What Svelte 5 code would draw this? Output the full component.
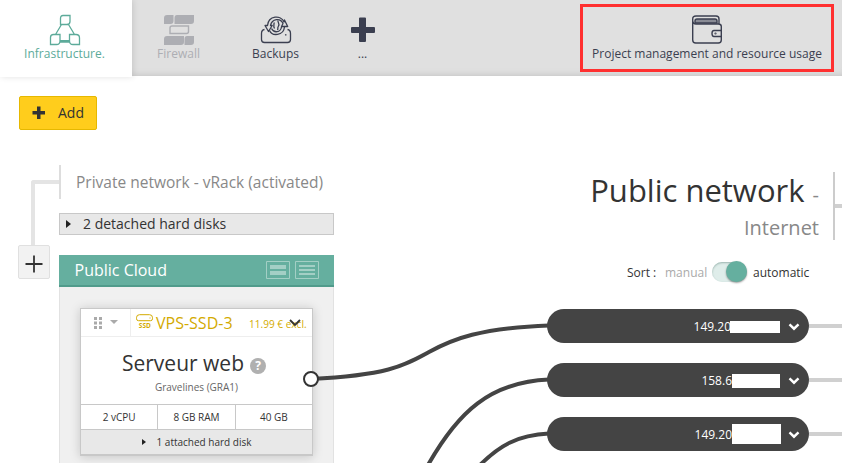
<script>
  const addresses = [
    { ip: '149.20', mask: { width: 50, height: 12, overlap: -1, gap: 1, drop: 1 } },
    { ip: '158.6', mask: { width: 48, height: 14, overlap: 0, gap: 1, drop: 2 } },
    { ip: '149.20', mask: { width: 49, height: 20, overlap: 0, gap: 0, drop: 0 } }
  ];
  const specs = ['2 vCPU', '8 GB RAM', '40 GB'];
</script>

<div class="app">
  <header>
    <div class="tab active">
      <svg width="32" height="32" viewBox="0 0 32 32" fill="none" stroke="#5dab9a" stroke-width="1.3">
        <path d="M14 1.500h7v6q0 3-3 3h-6.500v-6q0-3 2.500-3zM4.500 20.500h6.500v6.500q0 3.500-3.500 3.500h-6v-7q0-3 3-3zM20.500 20.500h6.500q3.500 0 3.500 3.500v6.500h-6.500q-3.500 0-3.500-3.500zM12.500 10.500 6.500 20.500M19.500 10.500 25.500 20.500M11 26.700h9.500M11 28h10" />
      </svg>
      <span>Infrastructure.</span>
    </div>
    <div class="tab disabled">
      <svg width="32" height="32" viewBox="0 0 32 32" fill="#adaeb3">
        <path d="M4 1h6.500v6q0 3-3 3H1V4q0-3 3-3zM14 1h17v6q0 3-3 3H11.500V4q0-3 2.500-3zM4 22h17v6q0 3-3 3H1v-6q0-3 3-3zM24 22h7v6q0 3-3 3h-6.500v-6q0-3 2.500-3z" />
        <path d="M9 12h16.500v5.500q0 2-2 2H7V14q0-2 2-2z" fill="none" stroke="#adaeb3" stroke-width="1.4" />
      </svg>
      <span>Firewall</span>
    </div>
    <div class="tab backups">
      <svg width="32" height="32" viewBox="0 0 32 32" fill="none" stroke="#3b3f50" stroke-width="1.3" stroke-linejoin="round">
        <path d="M4.500 15.500Q1.500 16 1.500 19.500v6q0 3 3 3h23q3 0 3-3v-6q0-3.500-3-4" />
        <path d="M7.500 11.500C8.500 1.500 21 .500 24 8L24.500 6 27.700 12.500H21.500L23 9.500C20.500 3.500 12 4.500 10.500 11.500H12.200L8.500 17.500 5 11.500z" />
        <path d="M24.500 13C23.500 22 12 22.500 9.500 16.500M21.500 13C20.500 18.500 14 19.500 11.500 14.500" />
        <path d="M14 8.500C14.500 10.500 12.800 12 14.500 14.500M18 6.500C17.500 8.500 20 9.500 18.500 12S18.500 14.500 17.500 16" />
        <path d="M25.700 20.200v1.300" stroke-width="1.500" />
      </svg>
      <span>Backups</span>
    </div>
    <div class="tab more">
      <svg width="32" height="32" viewBox="0 0 32 32" fill="#3b3f50">
        <path d="M13 3.500h5q1 0 1 1V13h8q1 0 1 1v4q0 1-1 1h-8v8q0 1-1 1h-5q-1 0-1-1v-8H5q-1 0-1-1v-4q0-1 1-1h7V4.500q0-1 1-1z" />
      </svg>
      <span>...</span>
    </div>
    <div class="project">
      <svg width="32" height="32" viewBox="0 0 32 32" fill="none" stroke="#3b3f50" stroke-width="1.400">
        <path d="M28 10V5q0-3-3-3H5Q1.700 2 1.700 5v21q0 3 3 3h22.600q3 0 3-3V12.500q0-2.500-3-2.500H5Q2 10 1.700 7" />
        <path d="M4 9V7q0-2 2-2h18q2 0 2 2v2z" fill="#898b95" />
        <path d="M30.300 16.500H23q-2 0-2 3t2 3h7.300" />
        <circle cx="24.500" cy="19.500" r=".4" />
      </svg>
      <span>Project management and resource usage</span>
    </div>
  </header>

  <div class="toolbar">
    <button class="add">
      <svg width="14" height="14" viewBox="0 0 14 14" fill="#333"><path d="M5 .5h3.500V5H13v3.500H8.500V13H5V8.500H.5V5H5z" /></svg>
      <span>Add</span>
    </button>
  </div>

  <main>
    <div class="rail">
      <div class="elbow"></div>
      <button class="plus" aria-label="Add network">
        <svg width="18" height="18" viewBox="0 0 18 18" stroke="#333" stroke-width="1.800"><path d="M9 .500v17M.500 9h17" /></svg>
      </button>
    </div>

    <section class="servers">
      <div class="vrack"><span>Private network - vRack (activated)</span></div>
      <div class="disks"><i class="tri"></i><span>2 detached hard disks</span></div>
      <div class="cloud-head">
        <span>Public Cloud</span>
        <svg width="24" height="18" viewBox="0 0 24 18"><path d="M.5.500h23v17H.500z" fill="none" stroke="#a3cfc5" /><path d="M4 4h16v4H4zM4 10h16v4H4z" fill="#a3cfc5" /></svg>
        <svg width="24" height="18" viewBox="0 0 24 18"><path d="M.5.500h23v17H.500z" fill="none" stroke="#a3cfc5" /><path d="M4 4h16v2H4zM4 8h16v2H4zM4 12h16v2H4z" fill="#a3cfc5" /></svg>
      </div>
      <div class="cloud-body">
        <article>
          <div class="card-head">
            <div class="handle">
              <svg width="26" height="14" viewBox="0 0 26 14" fill="#aaa"><path d="M1 1h3v3H1zM6 1h3v3H6zM1 5.500h3v3H1zM6 5.500h3v3H6zM1 10h3v3H1zM6 10h3v3H6zM17 4h8l-4 4z" /></svg>
            </div>
            <svg class="ssd" width="18" height="16" viewBox="0 0 18 16" fill="none" stroke="#d3aa00">
              <path d="M3.500.700h10q3 0 3 3v1q0 2-2 2h-12q-2 0-2-2v-1q0-3 3-3z" />
              <path d="M13.500 4h1" />
              <text x="2.800" y="14.200" font-size="6.500" font-weight="700" fill="#d3aa00" stroke="none" textLength="12" lengthAdjust="spacingAndGlyphs">SSD</text>
            </svg>
            <span class="model">VPS-SSD-3</span>
            <span class="price">11.99 € excl.</span>
            <svg class="chev" width="12" height="8" viewBox="0 0 12 8" fill="none" stroke="#333" stroke-width="1.800"><path d="m1 1 5 5 5-5" /></svg>
          </div>
          <div class="card-main">
            <div class="name"><span>Serveur web</span><b>?</b></div>
            <div class="region">Gravelines (GRA1)</div>
          </div>
          <div class="specs">
            {#each specs as spec}<div>{spec}</div>{/each}
          </div>
          <div class="attached"><i class="tri"></i><span>1 attached hard disk</span></div>
        </article>
      </div>
    </section>

    <section class="public">
      <div class="title">
        <div class="title-text">
          <div class="big"><span>Public network</span> <small>-</small></div>
          <div class="internet">Internet</div>
        </div>
        <div class="bar"></div>
        <div class="stub"></div>
      </div>
      <div class="sort">
        <span class="label">Sort :</span><span class="manual">manual</span>
        <span class="switch"><i></i></span><span class="auto">automatic</span>
      </div>
      {#each addresses as { ip, mask }}
        <div class="row">
          <div class="pill">
            <span class="ip">{ip}</span>
            <span
              class="mask"
              style="width:{mask.width}px;height:{mask.height}px;margin-left:{mask.overlap}px;margin-right:{mask.gap}px;margin-top:{mask.drop}px"
            ></span>
            <svg width="12" height="8" viewBox="0 0 12 8" fill="none" stroke="#fff" stroke-width="2.400"><path d="m1.500 1.300 4.500 4.400 4.500-4.400" /></svg>
          </div>
          <div class="tail"></div>
        </div>
      {/each}
    </section>
  </main>

  <svg class="links" width="842" height="463" viewBox="0 0 842 463" fill="none" stroke="#444" stroke-width="4">
    <path d="M311 379C390 375 405 365 429 352S480 328 549 325.500" />
    <path d="M549 379.500C490 382 458 412 428 465" />
    <path d="M549 433.500C517 435 499 446 480 465" />
    <circle cx="311" cy="379" r="7" fill="#fff" stroke="#333" stroke-width="2" />
  </svg>
</div>

<style>
  :global(body) { margin: 0; background: #fff; }
  .app { position: relative; width: 842px; height: 463px; overflow: hidden; font-family: 'Open Sans', sans-serif; color: #333; white-space: nowrap; }
  svg { display: block; flex: none; }
  button { font: inherit; color: inherit; padding: 0; }
  header { display: flex; height: 76px; background: #e0e0e0; box-shadow: inset 0 -5px 6px -4px #c4c4c4; }
  .tab { display: flex; flex-direction: column; align-items: center; padding-top: 14px; box-sizing: border-box; font-size: 12px; line-height: 16px; color: #3b3f50; }
  .active { width: 132px; height: 77px; padding-right: 3px; background: #fff; color: #5dab9a; box-shadow: 1px 0 6px rgba(0, 0, 0, .12); }
  .disabled { width: 93px; color: #adaeb3; }
  .backups { width: 101px; }
  .more { width: 73px; }
  .project { display: flex; flex-direction: column; align-items: center; box-sizing: border-box; width: 254px; height: 68px; margin: 4px 8px 0 auto; padding-top: 7px; border: 3px solid #ff3030; font-size: 12px; line-height: 16px; color: #3b3f50; }
  .toolbar { display: flex; padding: 20px 19px 0; }
  .add { display: flex; align-items: center; box-sizing: border-box; width: 78px; height: 34px; padding-left: 12px; gap: 12px; border: 1px solid #e6b800; border-radius: 2px; background: #ffcd1c; font-size: 14px; }
  .add span { margin-top: -2px; }
  main { display: flex; }
  .rail { width: 59px; padding-top: 50px; }
  .elbow { box-sizing: border-box; height: 65px; margin-left: 31px; border: solid #e4e4e4; border-width: 4px 0 0 4px; border-top-left-radius: 3px; }
  .plus { display: flex; align-items: center; justify-content: center; box-sizing: border-box; width: 32px; height: 34px; margin-left: 18px; padding-top: 3px; border: 1px solid #e0e0e0; border-radius: 2px; background: #f2f2f2; }
  .servers { width: 275px; padding-top: 35px; }
  .vrack { height: 34px; padding-left: 15px; border-left: 2px solid #ddd; font-size: 15.5px; line-height: 35px; color: #888; }
  .disks { display: flex; align-items: center; box-sizing: border-box; height: 22px; margin-top: 14px; padding-left: 6px; border: 1px solid #c8c8c8; background: #e8e8e8; font-size: 14px; gap: 12px; }
  .disks span { margin-top: -2px; }
  .tri { border: solid transparent; border-width: 4px 0 4px 5px; border-left-color: #222; }
  .cloud-head { display: flex; align-items: center; box-sizing: border-box; height: 32px; margin-top: 20px; padding: 0 15px 0 15.5px; gap: 5px; border-bottom: 2px solid #509b8b; background: #65af9f; color: #fff; font-size: 16px; }
  .cloud-head span { margin-right: auto; }
  .cloud-body { height: 180px; box-sizing: border-box; padding: 21px 20px 0; border: 1px solid #e2e2e2; border-top: 0; background: #f0f0f0; }
  article { box-sizing: border-box; width: 233px; height: 148px; border: 1px solid #c8c8c8; border-bottom-width: 2px; background: #fff; box-shadow: 0 1px 10px rgba(0, 0, 0, .18); }
  .card-head { display: flex; align-items: center; box-sizing: border-box; height: 28px; border-bottom: 1px solid #eee; color: #d3aa00; }
  .handle { display: flex; align-items: center; box-sizing: border-box; width: 50px; height: 27px; padding-left: 12px; border-right: 1px solid #eee; }
  .ssd { margin: -2px 2px 0 5px; }
  .model { width: 93px; font-size: 16px; }
  .price { width: 40px; margin-top: 3px; font-size: 10px; font-weight: 500; letter-spacing: .03px; }
  .chev { position: relative; }
  .card-main { height: 67px; text-align: center; }
  .name { display: flex; justify-content: center; align-items: center; padding: 10px 5px 0 0; font-size: 21px; line-height: 32px; gap: 6px; }
  .name b { width: 16px; height: 16px; margin-top: 5px; border-radius: 50%; background: #b0b0b0; color: #fff; font-size: 12px; line-height: 16px; }
  .region { margin-top: 1px; font-size: 10px; line-height: 14px; color: #666; }
  .specs { display: flex; height: 26px; box-sizing: border-box; border: solid #c8c8c8; border-width: 1px 0; font-size: 10px; line-height: 25px; text-align: center; }
  .specs div { flex: 1; }
  .specs div + div { border-left: 1px solid #c8c8c8; }
  .attached { display: flex; align-items: center; justify-content: center; height: 24px; gap: 11px; background: #e8e8e8; font-size: 10px; }
  .attached .tri { border-width: 3px 0 3px 4px; }
  .public { width: 295px; margin-left: 213px; padding-top: 42px; }
  .title { display: flex; justify-content: flex-end; height: 68px; }
  .title-text { width: 240px; margin-right: 14px; text-align: right; }
  .big { font-size: 31px; line-height: 36px; }
  .big small, .internet { font-size: 20px; color: #888; }
  .internet { line-height: 30px; }
  .bar { width: 2px; background: #ccc; }
  .stub { width: 7px; height: 4px; margin-top: 32px; background: #d0d0d0; }
  .sort { display: flex; align-items: center; height: 20px; margin: 22px 0 27px 80px; font-size: 12px; }
  .label { width: 38px; }
  .manual { width: 47px; color: #aaa; }
  .switch { display: flex; justify-content: flex-end; box-sizing: border-box; width: 35px; height: 20px; border-radius: 10px; background: #dfedea; box-shadow: inset 0 1px 2px #9bb5af; }
  .switch i { width: 21px; height: 21px; margin-top: -1px; border-radius: 50%; background: #65af9f; box-shadow: 0 1px 2px rgba(0, 0, 0, .4); }
  .auto { margin-left: 6px; }
  .row { display: flex; align-items: center; height: 34px; margin-bottom: 20px; }
  .pill { display: flex; align-items: center; justify-content: flex-end; box-sizing: border-box; width: 262px; height: 34px; padding-right: 9px; border-radius: 17px; background: #444; color: #fff; font-size: 12px; }
  .pill svg { margin: 2px 0 0 7px; }
  .mask { background: #fff; }
  .tail { width: 33px; height: 4px; background: #d0d0d0; }
  .links { position: absolute; inset: 0; pointer-events: none; }
</style>
